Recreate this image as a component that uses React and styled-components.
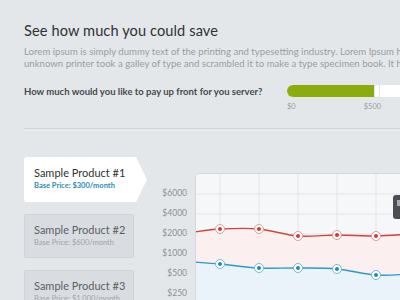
import React from 'react';
import styled, { createGlobalStyle } from 'styled-components';

const GlobalStyle = createGlobalStyle`
    html, body {
        margin: 0;
        padding: 0;
        overflow: hidden;
        background: #e4e7ea;
    }
    body {
        font-family: Lato, "Open Sans", sans-serif;
        width: 400px;
        height: 300px;
    }
`

const products = [
    { name: 'Sample Product #1', price: '$300/month' },
    { name: 'Sample Product #2', price: '$600/month' },
    { name: 'Sample Product #3', price: '$1,000/month' },
];

const axis = ['$6000', '$4000', '$2000', '$1000', '$500', '$250'];

const red = [[-2, 58], [24, 55], [63, 55], [102, 62], [141, 61], [180, 62], [215, 60]];
const blue = [[-2, 88], [24, 90], [63, 94], [102, 94], [141, 95], [180, 101], [215, 100]];

// smooth line through points
const smooth = (pts) => {
    let d = `M${pts[0][0]},${pts[0][1]}`;
    for (let i = 0; i < pts.length - 1; i++) {
        const p0 = pts[i - 1] || pts[i];
        const p1 = pts[i];
        const p2 = pts[i + 1];
        const p3 = pts[i + 2] || p2;
        const c1x = p1[0] + (p2[0] - p0[0]) / 6;
        const c1y = p1[1] + (p2[1] - p0[1]) / 6;
        const c2x = p2[0] - (p3[0] - p1[0]) / 6;
        const c2y = p2[1] - (p3[1] - p1[1]) / 6;
        d += ` C${c1x},${c1y} ${c2x},${c2y} ${p2[0]},${p2[1]}`;
    }
    return d;
};

const Chart = () => {
    const redPath = smooth(red);
    const bluePath = smooth(blue);
    const back = smooth([...blue].reverse()).replace(/^M/, 'L');
    return (
        <ChartBox>
            <svg width="260" height="140" viewBox="0 0 260 140">
                {[20, 40, 60, 80, 100, 120].map(y => (
                    <line key={y} x1="0" x2="260" y1={y} y2={y} stroke="#e3e6ea" strokeWidth="1" />
                ))}
                {[24, 63, 102, 141, 180, 219].map(x => (
                    <line key={x} x1={x} x2={x} y1="0" y2="140" stroke="#e3e6ea" strokeWidth="1" />
                ))}
                <path d={`${bluePath} L215,140 L-2,140 Z`} fill="#eaf3f9" />
                <path d={`${redPath} ${back} Z`} fill="#fcefef" />
                <path d={redPath} fill="none" stroke="#c9473b" strokeWidth="1.4" />
                <path d={bluePath} fill="none" stroke="#2b9bc9" strokeWidth="1.4" />
                {red.slice(1, 6).map(([x, y]) => (
                    <g key={'r' + x}>
                        <circle cx={x} cy={y} r="4.5" fill="#fff" stroke="#e59a92" strokeWidth="1" />
                        <circle cx={x} cy={y} r="2" fill="#d13a36" />
                    </g>
                ))}
                {blue.slice(1, 6).map(([x, y]) => (
                    <g key={'b' + x}>
                        <circle cx={x} cy={y} r="4.5" fill="#fff" stroke="#6dbbdc" strokeWidth="1" />
                        <circle cx={x} cy={y} r="2" fill="#1f8cbd" />
                    </g>
                ))}
            </svg>
            <Tooltip><span /></Tooltip>
        </ChartBox>
    );
};

const App = () => {
    return (
        <Page>
            <GlobalStyle />
            <Title>See how much you could save</Title>
            <Intro>
                <span>Lorem ipsum is simply dummy text of the printing and typesetting industry. Lorem Ipsum has been the industry's standard dummy text ever since the 1500s, when an</span>
                <span>unknown printer took a galley of type and scrambled it to make a type specimen book. It has survived not only five centuries.</span>
            </Intro>
            <QuestionRow>
                <Question>How much would you like to pay up front for you server?</Question>
                <Slider>
                    <Track>
                        <Fill style={{ width: 88 }} />
                        <Handle />
                    </Track>
                    <Ticks>
                        <span>$0</span>
                        <span>$500</span>
                    </Ticks>
                </Slider>
            </QuestionRow>
            <Divider />
            <Bottom>
                <Cards>
                    {products.map((p, i) => (
                        <Card key={p.name} $active={i === 0}>
                            <CardTitle $active={i === 0}>{p.name}</CardTitle>
                            <CardPrice $active={i === 0}>Base Price: {p.price}</CardPrice>
                        </Card>
                    ))}
                </Cards>
                <Axis>
                    {axis.map(a => <AxisLabel key={a}>{a}</AxisLabel>)}
                </Axis>
                <Chart />
            </Bottom>
        </Page>
    );
}

export default App;

const Page = styled.div`
    width: 640px;
    padding: 22px 0 0 24px;
    color: #333;
`

const Title = styled.h1`
    margin: 0;
    font-size: 14.6px;
    line-height: 18px;
    font-weight: 400;
    color: #2f3134;
    letter-spacing: 0.1px;
`

const Intro = styled.p`
    margin: 6px 0 0;
    font-size: 9.6px;
    line-height: 11.5px;
    color: #9a9da1;
    span {
        display: block;
        white-space: nowrap;
    }
`

const QuestionRow = styled.div`
    display: flex;
    align-items: flex-start;
    margin-top: 16px;
`

const Question = styled.div`
    width: 263px;
    padding-top: 1px;
    font-size: 9.5px;
    line-height: 12px;
    font-weight: 700;
    color: #46494d;
`

const Slider = styled.div`
    display: flex;
    flex-direction: column;
`

const Track = styled.div`
    position: relative;
    width: 200px;
    height: 12px;
    border-radius: 6px;
    background: #fff;
`

const Fill = styled.div`
    height: 100%;
    border-radius: 6px 0 0 6px;
    background: #8aac0d;
`

const Handle = styled.div`
    position: absolute;
    left: 87px;
    top: -1px;
    width: 6px;
    height: 14px;
    border-radius: 2px;
    background: #fff;
    border: 1px solid #e2e4e6;
    box-sizing: border-box;
`

const Ticks = styled.div`
    display: flex;
    gap: 68px;
    margin-top: 5px;
    font-size: 7.5px;
    color: #9a9da1;
`

const Divider = styled.div`
    margin-top: 17px;
    height: 1px;
    border-top: 1px solid #d2d5d8;
    border-bottom: 1px solid #eef0f2;
`

const Bottom = styled.div`
    display: flex;
    align-items: flex-start;
    margin-top: 26px;
`

const Cards = styled.div`
    display: flex;
    flex-direction: column;
    gap: 12px;
    width: 123px;
`

const Card = styled.div`
    box-sizing: border-box;
    height: ${p => p.$active ? 45 : 44}px;
    width: ${p => p.$active ? 123 : 110}px;
    padding: 9px 0 0 10px;
    background: ${p => p.$active ? '#fff' : '#d9dde1'};
    border-radius: 3px;
    clip-path: ${p => p.$active
        ? 'polygon(0 0, calc(100% - 11px) 0, 100% 50%, calc(100% - 11px) 100%, 0 100%)'
        : 'none'};
    box-shadow: ${p => p.$active ? 'none' : 'inset 0 0 0 1px #d0d4d8'};
`

const CardTitle = styled.div`
    font-size: 11px;
    line-height: 14px;
    color: ${p => p.$active ? '#2f3134' : '#5b5f63'};
`

const CardPrice = styled.div`
    margin-top: 1px;
    font-size: 7.5px;
    line-height: 10px;
    font-weight: ${p => p.$active ? 700 : 400};
    color: ${p => p.$active ? '#2a8db5' : '#a0a4a8'};
`

const Axis = styled.div`
    width: 40px;
    padding-top: 26px;
    text-align: right;
`

const AxisLabel = styled.div`
    font-size: 8.5px;
    line-height: 20px;
    color: #8d9094;
`

const ChartBox = styled.div`
    position: relative;
    margin: 16px 0 0 8px;
    width: 260px;
    height: 140px;
    background: #f6f7f8;
    border: 1px solid #d6d9dc;
    border-radius: 3px 0 0 0;
    overflow: hidden;
    svg {
        display: block;
    }
`

const Tooltip = styled.div`
    position: absolute;
    left: 197px;
    top: 21px;
    width: 40px;
    height: 24px;
    border-radius: 3px;
    background: #4a4d51;
    span {
        position: absolute;
        left: 4px;
        top: 5px;
        width: 4px;
        height: 6px;
        background: #a9acaf;
    }
`
